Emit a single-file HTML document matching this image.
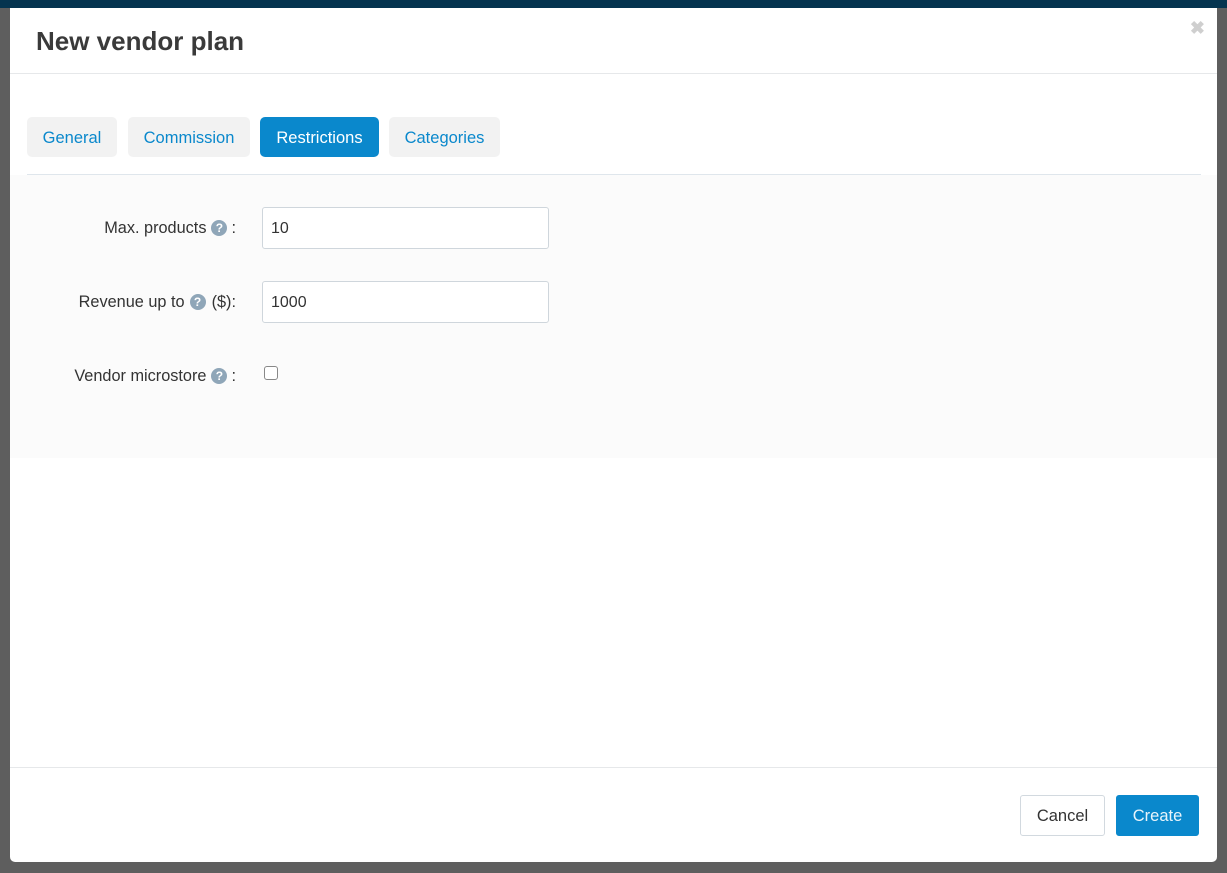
<!DOCTYPE html>
<html><head><style>
*{box-sizing:border-box;margin:0;padding:0}
body{width:1227px;height:873px;background:#5e5e5e;font-family:"Liberation Sans",sans-serif;position:relative;overflow:hidden}
.top{position:absolute;left:0;top:0;width:1227px;height:8px;background:#05344f}
.modal{position:absolute;left:10px;top:8px;width:1207px;height:854px;background:#fff;border-radius:0 0 5px 5px}
.hdr{height:66px;border-bottom:1px solid #e6e8ea;position:relative}
.hdr h3{position:absolute;left:26px;top:18px;font-size:26px;font-weight:bold;color:#3a3a3a}
.x{position:absolute;right:12px;top:10px;font-size:18px;color:#cfcfcf;font-weight:bold}
.tab{position:absolute;top:109px;height:40px;border-radius:5px;background:#f2f2f2;color:#0a88cc;font-size:16.5px;line-height:42px;text-align:center}
.tab.a{background:#0a88cc;color:#fff}
.line{position:absolute;left:17px;top:166px;width:1174px;height:1px;background:#dfe6ec}
.form{position:absolute;left:0;top:167px;width:1207px;height:283px;background:#fbfbfb}
.lbl{position:absolute;right:981px;font-size:16.3px;color:#333;white-space:nowrap}
.q{display:inline-block;width:16px;height:16px;border-radius:50%;background:#8fa6b8;color:#fff;font-size:12px;font-weight:bold;text-align:center;line-height:16px;vertical-align:1px;margin:0 4px 0 5px}
.inp{position:absolute;left:252px;width:287px;height:42px;border:1px solid #cfd6dc;border-radius:3px;background:#fff;font-size:16px;color:#333;padding:12px 8px 0}
.cb{position:absolute;left:254px;top:358px;width:14px;height:14px;border:1px solid #888;border-radius:3px;background:#fff}
.ftr{position:absolute;left:0;top:759px;width:1207px;border-top:1px solid #e6e8ea}
.btn{position:absolute;top:787px;height:41px;border-radius:3px;font-size:16.5px;line-height:41px;text-align:center}
</style></head><body>
<div class="top"></div>
<div class="modal">
<div class="hdr"><h3>New vendor plan</h3><div class="x">✖</div></div>
<div class="tab" style="left:17px;width:90px">General</div>
<div class="tab" style="left:118px;width:122px">Commission</div>
<div class="tab a" style="left:250px;width:119px">Restrictions</div>
<div class="tab" style="left:379px;width:111px">Categories</div>
<div class="line"></div>
<div class="form"></div>
<div class="lbl" style="top:211px">Max. products<span class="q">?</span>:</div>
<div class="inp" style="top:199px">10</div>
<div class="lbl" style="top:285px">Revenue up to<span class="q" style="margin-right:6px">?</span>($):</div>
<div class="inp" style="top:273px">1000</div>
<div class="lbl" style="top:359px">Vendor microstore<span class="q">?</span>:</div>
<div class="cb"></div>
<div class="ftr"></div>
<div class="btn" style="left:1010px;width:85px;border:1px solid #d2d9df;background:#fff;color:#333">Cancel</div>
<div class="btn" style="left:1106px;width:83px;background:#0a88cc;color:#e8f4fb;border:1px solid #0a88cc">Create</div>
</div>
</body></html>
